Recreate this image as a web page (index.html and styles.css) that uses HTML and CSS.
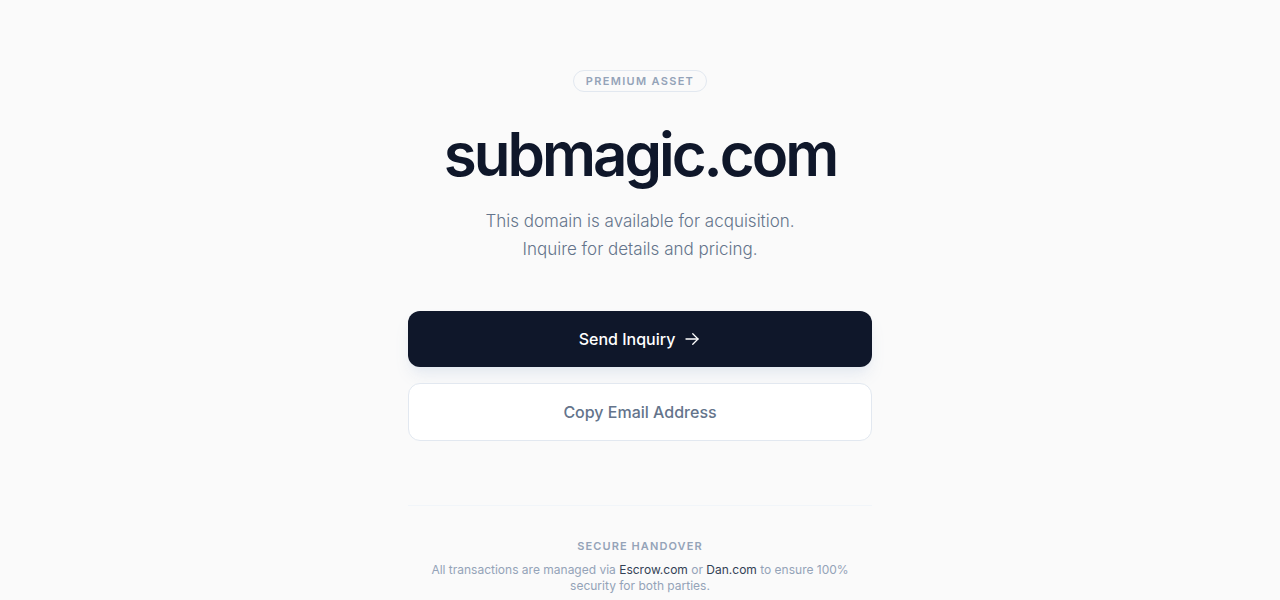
FILE: index.html
```html
<!DOCTYPE html>
<html lang="en">
<head>
  <meta charset="UTF-8">
  <title>submagic.com - Premium Asset</title>
  <link rel="stylesheet" href="styles.css">
</head>
<body>

  <main class="card">
    <span class="badge">Premium Asset</span>

    <h1 class="domain">submagic.com</h1>

    <p class="lead">
      This domain is available for acquisition.<br>
      Inquire for details and pricing.
    </p>

    <div class="actions">
      <button class="btn btn-primary">
        Send Inquiry
        <svg width="18" height="18" viewBox="0 0 24 24" fill="none" stroke="currentColor" stroke-width="1.75" stroke-linecap="round" stroke-linejoin="round">
          <path d="M4 12h16"/>
          <path d="M13 5l7 7-7 7"/>
        </svg>
      </button>
      <button class="btn btn-secondary">Copy Email Address</button>
    </div>

    <footer class="handover">
      <h3>Secure Handover</h3>
      <p>All transactions are managed via <a href="#">Escrow.com</a> or <a href="#">Dan.com</a> to ensure 100% security for both parties.</p>
    </footer>
  </main>

</body>
</html>
```

FILE: styles.css
```css
body {
  margin: 0;
  background: #fafafa;
  font-family: Inter, "Noto Sans", sans-serif;
  color: #0f172a;
}
.card {
  max-width: 464px;
  margin: 0 auto;
  padding-top: 70px;
  display: flex;
  flex-direction: column;
  align-items: center;
  text-align: center;
}
.badge {
  display: inline-block;
  padding: 4px 12px;
  border: 1px solid #e2e8f0;
  border-radius: 999px;
  font-size: 11px;
  line-height: 12px;
  font-weight: 600;
  letter-spacing: 0.12em;
  text-transform: uppercase;
  color: #94a3b8;
}
.domain {
  margin: 26px 0 0;
  font-size: 60px;
  line-height: 72px;
  font-weight: 600;
  letter-spacing: -0.05em;
  color: #0f172a;
}
.lead {
  margin: 17px 0 0;
  font-size: 17px;
  line-height: 28px;
  font-weight: 300;
  color: #64748b;
}
.actions {
  width: 100%;
  margin-top: 48px;
  display: flex;
  flex-direction: column;
  gap: 16px;
}
.btn {
  display: flex;
  align-items: center;
  justify-content: center;
  gap: 8px;
  width: 100%;
  height: 56px;
  border-radius: 12px;
  font-family: inherit;
  font-size: 16px;
  font-weight: 500;
  cursor: pointer;
}
.btn-primary {
  background: #0f172a;
  color: #fff;
  border: none;
  box-shadow: 0 10px 15px -3px rgba(226, 232, 240, 0.9), 0 4px 6px -4px rgba(226, 232, 240, 0.9);
}
.btn-secondary {
  height: 58px;
  background: #fff;
  color: #64748b;
  border: 1px solid #e2e8f0;
}
.handover {
  width: 100%;
  margin-top: 64px;
  padding-top: 32px;
  border-top: 1px solid #f1f5f9;
}
.handover h3 {
  margin: 0;
  font-size: 11px;
  line-height: 16px;
  font-weight: 600;
  letter-spacing: 0.1em;
  text-transform: uppercase;
  color: #94a3b8;
}
.handover p {
  margin: 8px 0 0;
  padding: 0 16px;
  font-size: 12px;
  line-height: 16px;
  color: #94a3b8;
}
.handover a {
  color: #334155;
  text-decoration: none;
}
```
